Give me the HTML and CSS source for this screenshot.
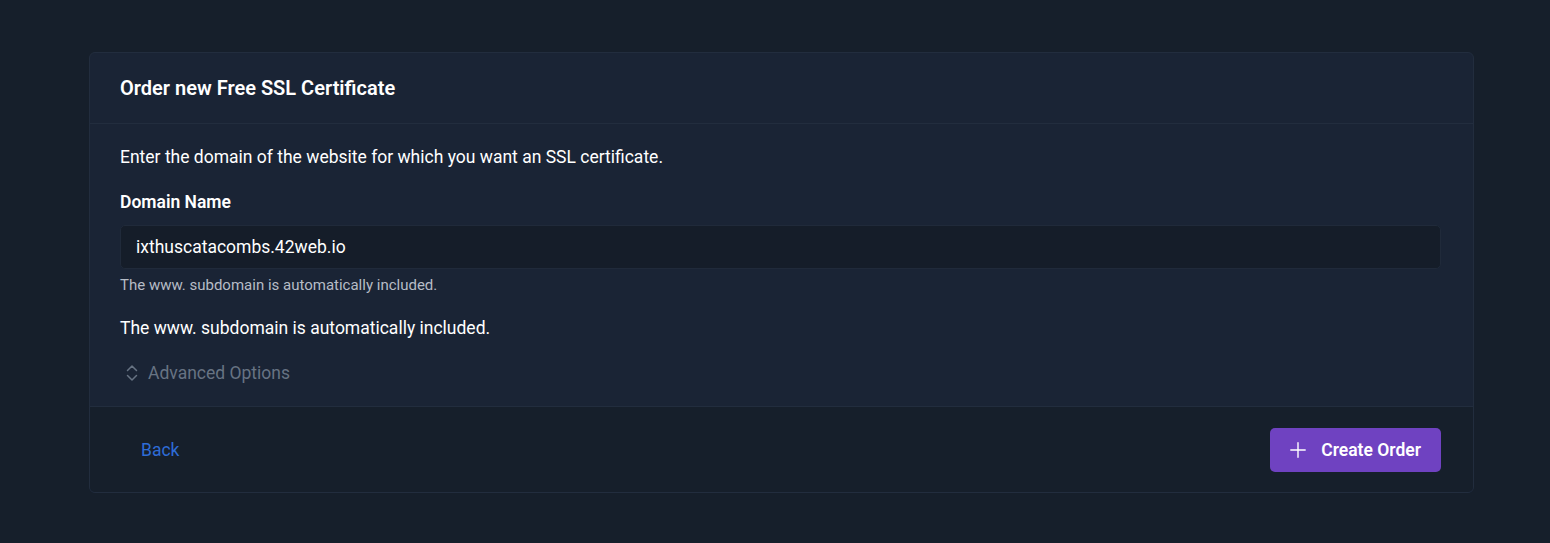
FILE: index.html
```html
<!DOCTYPE html>
<html>
<head>
<meta charset="utf-8">
<link rel="stylesheet" href="styles.css">
</head>
<body>
<div class="card">
  <div class="card-header">
    <h2 class="title">Order new Free SSL Certificate</h2>
  </div>
  <div class="card-body">
    <p class="intro">Enter the domain of the website for which you want an SSL certificate.</p>
    <label class="label">Domain Name</label>
    <div class="input">ixthuscatacombs.42web.io</div>
    <div class="help">The www. subdomain is automatically included.</div>
    <p class="note">The www. subdomain is automatically included.</p>
    <div class="advanced">
      <svg class="chev" width="14" height="20" viewBox="0 0 14 20" fill="none" stroke="currentColor" stroke-width="1.5" stroke-linecap="round" stroke-linejoin="round"><path d="M2.5 7.5 L7 3 L11.5 7.5"/><path d="M2.5 12.5 L7 17 L11.5 12.5"/></svg>
      <span>Advanced Options</span>
    </div>
  </div>
  <div class="card-footer">
    <a class="back">Back</a>
    <button class="btn">
      <svg width="16" height="16" viewBox="0 0 16 16" fill="none" stroke="currentColor" stroke-width="1.4" stroke-linecap="round"><path d="M8 0.8 V15.2 M0.8 8 H15.2"/></svg>
      <span>Create Order</span>
    </button>
  </div>
</div>
</body>
</html>
```

FILE: styles.css
```css
html, body {
  margin: 0;
  padding: 0;
  background: #161f2b;
}
body {
  font-family: Roboto, "Liberation Sans", Arial, sans-serif;
  color: #ffffff;
  padding: 52px 76px 0 89px;
}
.card {
  background: #1a2435;
  border: 1px solid #222d3e;
  border-radius: 6px;
  overflow: hidden;
}
.card-header {
  height: 70px;
  border-bottom: 1px solid #222d3e;
  display: flex;
  align-items: center;
  padding: 0 32px 0 30px;
}
.title {
  margin: 0;
  font-size: 20px;
  font-weight: 600;
  color: #ffffff;
}
.card-body {
  padding: 21px 32px 21px 30px;
  display: flex;
  flex-direction: column;
}
.intro {
  margin: 0;
  font-size: 17.5px;
  line-height: 24px;
}
.label {
  margin-top: 21px;
  font-size: 17.5px;
  font-weight: 600;
  line-height: 24px;
}
.input {
  margin-top: 11px;
  height: 42px;
  border: 1px solid #202a3a;
  border-radius: 5px;
  background: #151d29;
  display: flex;
  align-items: center;
  padding: 0 15px;
  font-size: 17.5px;
}
.help {
  margin-top: 7px;
  font-size: 15px;
  line-height: 18px;
  color: #b6bcc6;
}
.note {
  margin: 22px 0 0 0;
  font-size: 17.5px;
  line-height: 24px;
}
.advanced {
  margin-top: 21px;
  display: flex;
  align-items: center;
  gap: 9px;
  color: #677383;
  font-size: 17.5px;
  line-height: 24px;
  padding-left: 5px;
}
.chev { color: #677383; }
.card-footer {
  background: #161f2b;
  border-top: 1px solid #222d3e;
  height: 85px;
  display: flex;
  align-items: center;
  justify-content: space-between;
  padding: 0 32px 0 30px;
}
.back {
  color: #2e6cd6;
  font-size: 17.5px;
  padding: 10px 21px;
}
.btn {
  background: #6f42c1;
  color: #ffffff;
  border: none;
  border-radius: 5px;
  height: 44px;
  padding: 0 20px 0 20px;
  display: flex;
  align-items: center;
  gap: 15px;
  font-family: inherit;
  font-size: 17.5px;
  font-weight: 600;
}
```
